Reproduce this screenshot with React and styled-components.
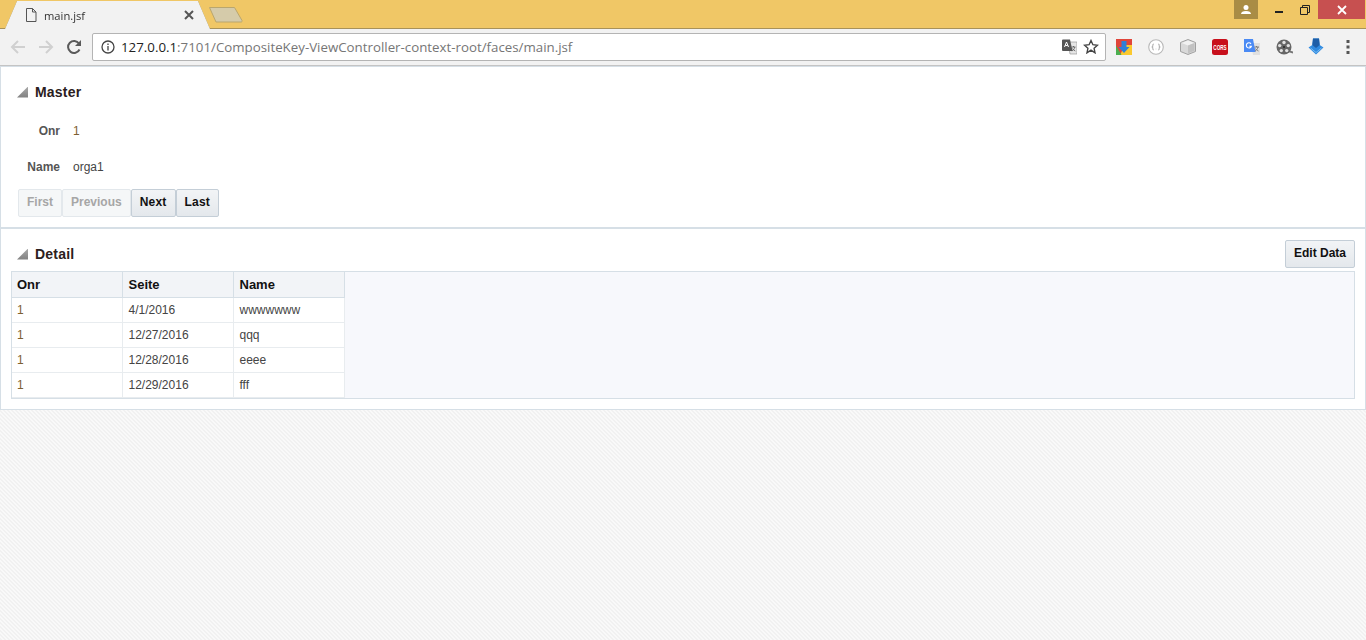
import React from "react";
import styled, { createGlobalStyle } from "styled-components";

const GlobalStyle = createGlobalStyle`
  html, body {
    margin: 0;
    padding: 0;
    height: 640px;
    overflow: hidden;
    font-family: "Liberation Sans", Arial, sans-serif;
    font-size: 12px;
    color: #444;
  }
  * { box-sizing: border-box; }
`;

const Page = styled.div`
  width: 1366px;
  height: 640px;
  display: flex;
  flex-direction: column;
  background-color: #f9f9f9;
  background-image: linear-gradient(
    45deg,
    #f1f1f1 25%,
    transparent 25%,
    transparent 50%,
    #f1f1f1 50%,
    #f1f1f1 75%,
    transparent 75%
  );
  background-size: 4px 4px;
`;

const TabStrip = styled.div`
  height: 29px;
  flex: none;
  display: flex;
  align-items: flex-end;
  background: #f0c766;
  border-bottom: 1px solid #a8925a;
`;

const TabShell = styled.div`
  margin-left: 5px;
  margin-bottom: -1px;
  filter: drop-shadow(0 0 0.6px #8a7433);
`;

const Tab = styled.div`
  width: 206px;
  height: 28px;
  padding: 0 17px 0 20px;
  display: flex;
  align-items: center;
  gap: 7px;
  background: #f2f2f2;
  clip-path: polygon(0 100%, 12px 0, 193px 0, 205px 100%);
  font-family: "Open Sans", sans-serif;
  font-size: 11.2px;
  color: #333;
`;

const TabTitle = styled.span`
  flex: 1;
`;

const NewTab = styled.svg`
  flex: none;
  margin-left: -3px;
  margin-bottom: 4px;
`;

const WindowControls = styled.div`
  margin-left: auto;
  align-self: flex-start;
  height: 19px;
  display: flex;
  padding-right: 1px;
`;

const Avatar = styled.div`
  width: 24px;
  height: 19px;
  margin-right: 8px;
  display: flex;
  align-items: center;
  justify-content: center;
  background: #a98c45;
`;

const WinButton = styled.div`
  width: ${(p) => p.$w}px;
  height: 19px;
  display: flex;
  align-items: center;
  justify-content: center;
  background: ${(p) => p.$bg || "transparent"};
`;

const Toolbar = styled.div`
  height: 37px;
  flex: none;
  display: flex;
  align-items: center;
  padding: 0 0 1px 4px;
  background: #f2f2f2;
  border-bottom: 1px solid #c4c4c4;
`;

const NavButton = styled.div`
  width: 28px;
  height: 28px;
  display: flex;
  align-items: center;
  justify-content: center;
`;

const Omnibox = styled.div`
  width: 1014px;
  height: 28px;
  margin-left: 4px;
  padding: 0 0 0 8px;
  display: flex;
  align-items: center;
  background: #fff;
  border: 1px solid #b4b4b4;
  border-radius: 2px;
`;

const Url = styled.div`
  flex: 1;
  margin-left: 6px;
  font-family: "Open Sans", sans-serif;
  font-size: 13.3px;
  color: #767676;
  white-space: nowrap;
`;

const Host = styled.span`
  color: #222;
`;

const StarSlot = styled.div`
  width: 28px;
  height: 26px;
  display: flex;
  align-items: center;
  justify-content: center;
`;

const Extensions = styled.div`
  display: flex;
  margin-left: 2px;
`;

const ExtIcon = styled.div`
  width: 32px;
  height: 28px;
  display: flex;
  align-items: center;
  justify-content: center;
`;

const Content = styled.div`
  width: 1366px;
  flex: none;
  display: flex;
  flex-direction: column;
  background: #fff;
  border: 1px solid #d6dfe6;
`;

const MasterPanel = styled.section`
  height: 160px;
  flex: none;
`;

const DetailPanel = styled.section`
  height: 182px;
  flex: none;
  padding: 11px 10px 0;
  border-top: 2px solid #d6dfe6;
`;

const PanelHeader = styled.div`
  height: ${(p) => p.$h}px;
  margin-bottom: ${(p) => p.$mb || 0}px;
  padding-left: ${(p) => p.$pl}px;
  display: flex;
  align-items: center;
`;

const Disclosure = styled.span`
  width: 11px;
  height: 11px;
  margin-right: 7px;
  background: linear-gradient(#a8a8a8, #808080);
  clip-path: polygon(100% 0, 100% 100%, 0 100%);
`;

const PanelTitle = styled.h2`
  margin: 0;
  font-size: 14px;
  letter-spacing: 0.2px;
  font-weight: bold;
  color: #2b2020;
`;

const FormRow = styled.div`
  height: ${(p) => p.$h}px;
  display: grid;
  grid-template-columns: 59px 1fr;
  column-gap: 13px;
  align-items: center;
`;

const FieldLabel = styled.label`
  text-align: right;
  font-weight: bold;
  color: #555;
`;

const FieldValue = styled.span`
  color: ${(p) => (p.$number ? "#7d6030" : "#444")};
`;

const ButtonRow = styled.div`
  display: flex;
  margin-left: 17px;
`;

const Btn = styled.button`
  height: 28px;
  padding: 0 8px 2px;
  font-family: inherit;
  font-size: 12px;
  font-weight: bold;
  letter-spacing: ${(p) => (p.disabled ? "0" : "0.2px")};
  color: ${(p) => (p.disabled ? "#a6a6a6" : "#111")};
  background: ${(p) =>
    p.disabled ? "#f5f7f8" : "linear-gradient(#f2f4f6, #e4e8ec)"};
  border: 1px solid ${(p) => (p.disabled ? "#e3e8ec" : "#c4ced7")};
  border-radius: 2px;
`;

const EditButton = styled(Btn)`
  margin-left: auto;
  letter-spacing: 0;
`;

const TableFrame = styled.div`
  height: 128px;
  background: #f7f8fc;
  border: 1px solid #d6dfe6;
`;

const Table = styled.table`
  width: 332px;
  border-collapse: collapse;
  table-layout: fixed;
  background: #fff;
`;

const Th = styled.th`
  height: 25px;
  padding: 0 5px;
  text-align: left;
  font-size: 13px;
  font-weight: bold;
  color: #111;
  background: #f2f4f7;
  border-right: 1px solid #d6dfe6;
  border-bottom: 1px solid #d6dfe6;

  & + & {
    padding-left: 6px;
  }
`;

const Td = styled.td`
  height: 25px;
  padding: 0 5px;
  font-size: 12px;
  color: ${(p) => (p.$number ? "#7d6030" : "#444")};
  border-right: 1px solid #e8ecef;
  border-bottom: 1px solid #e8ecef;

  & + & {
    padding-left: 6px;
  }
`;

const rows = [
  ["1", "4/1/2016", "wwwwwww"],
  ["1", "12/27/2016", "qqq"],
  ["1", "12/28/2016", "eeee"],
  ["1", "12/29/2016", "fff"],
];

const DocIcon = () => (
  <svg width="12" height="14" viewBox="0 0 12 14" fill="none" stroke="#555" strokeWidth="1">
    <path d="M1.5.5h6l3.500 3.500v9.500H1.500zM7.500.5V4H11" />
  </svg>
);

const CloseIcon = () => (
  <svg width="10" height="10" viewBox="0 0 10 10" stroke="#555" strokeWidth="2">
    <path d="M1 1l8 8M9 1l-8 8" />
  </svg>
);

const BackIcon = ({ flip }) => (
  <svg width="16" height="16" viewBox="0 0 16 16" fill="none" stroke="#d0d0d0" strokeWidth="2" transform={flip ? "scale(-1 1)" : undefined}>
    <path d="M15 8H2M8 2L2 8l6 6" />
  </svg>
);

const ReloadIcon = () => (
  <svg width="16" height="16" viewBox="0 0 16 16" fill="none">
    <path d="M13.500 10.500A6 6 0 1 1 13 4.500" stroke="#5a5a5a" strokeWidth="2" />
    <path d="M15 1v6H9z" fill="#5a5a5a" />
  </svg>
);

const InfoIcon = () => (
  <svg width="14" height="14" viewBox="0 0 14 14" fill="none" stroke="#444" strokeWidth="1.300">
    <circle cx="7" cy="7" r="6" />
    <path d="M7 6v4.500M7 3.500v1.500" />
  </svg>
);

const TranslateIcon = () => (
  <svg width="15" height="16" viewBox="0 0 15 16">
    <path d="M6 3h9v12H8z" fill="#e6e6e6" stroke="#8a8a8a" strokeWidth=".6" />
    <path d="M0 1.500A1 1 0 0 1 1 .5h7l2.500 11.500H1a1 1 0 0 1-1-1z" fill="#555" />
    <path d="M2.500 8l2-5 2 5M3.300 6.500h2.400" stroke="#fff" strokeWidth="1" fill="none" />
    <path d="M9.500 8h4M11.500 7v1M12.800 8c-.4 2-1.600 3.500-3 4M10.500 9.500c.5 1.200 1.500 2 2.800 2.500" stroke="#555" strokeWidth=".8" fill="none" />
  </svg>
);

const StarIcon = () => (
  <svg width="16" height="15" viewBox="0 0 16 15" fill="none" stroke="#444" strokeWidth="1.400">
    <path d="M8 1.500l1.900 4.200 4.600.500-3.400 3.100.9 4.500L8 11.100l-4 2.700.9-4.500L1.500 6.200l4.600-.500z" />
  </svg>
);

const ChromeStoreIcon = () => (
  <svg width="16" height="16" viewBox="0 0 16 16">
    <rect width="16" height="16" fill="#fbc92e" />
    <path d="M0 0h16v6H9L4 16H0z" fill="#e0453a" />
    <path d="M0 6.500L5.500 16H0z" fill="#4caf50" />
    <path d="M5.500 2h5v6h3L8 14 2.500 8h3z" fill="#2f7fd6" />
  </svg>
);

const BracesIcon = () => (
  <svg width="16" height="16" viewBox="0 0 16 16" fill="none">
    <circle cx="8" cy="8" r="7.300" fill="#fff" stroke="#b8b8b8" strokeWidth="1.100" />
    <path d="M5.800 5c-1 0-1 .8-1 1.500S4.800 8 3.800 8c1 0 1 .8 1 1.500s0 1.500 1 1.500M10.200 5c1 0 1 .8 1 1.500s0 1.500 1 1.500c-1 0-1 .8-1 1.500s0 1.500-1 1.500" stroke="#888" strokeWidth=".8" />
    <path d="M7.300 10h.2M8.500 10h.2" stroke="#888" strokeWidth=".8" />
  </svg>
);

const CubeIcon = () => (
  <svg width="16" height="16" viewBox="0 0 16 16">
    <path d="M8 .5l7.500 3v9L8 15.500.5 12.500v-9z" fill="#d9d9d9" stroke="#a0a0a0" />
    <path d="M1.500 4L8 1.500 14.500 4 8 6.500z" fill="#f1f1f1" />
    <path d="M8 6.500V14.500l6.500-2.700V4z" fill="#c2c2c2" />
  </svg>
);

const CorsIcon = () => (
  <svg width="16" height="16" viewBox="0 0 16 16">
    <rect width="16" height="16" rx="2.500" fill="#c8101c" />
    <text transform="translate(8 10.800) scale(.58 1)" textAnchor="middle" fontSize="8" fontWeight="bold" fill="#fff" fontFamily="Liberation Sans, sans-serif">CORS</text>
  </svg>
);

const GoogleTranslateIcon = () => (
  <svg width="16" height="16" viewBox="0 0 16 16">
    <path d="M7 4h9v12H9z" fill="#e0e0e0" />
    <path d="M0 0h9l2.500 13H0z" fill="#4a8af4" />
    <path d="M7 4.800A2.600 2.600 0 1 0 7.400 7.300H5.300" stroke="#fff" strokeWidth="1.100" fill="none" />
    <path d="M10.500 8h4.500M12.500 7v1M14 8c-.5 2-1.500 3.300-3 4.200M11.500 9.500c.6 1.200 1.500 2 3 2.500" stroke="#666" strokeWidth=".8" fill="none" />
  </svg>
);

const ReelIcon = () => (
  <svg width="17" height="16" viewBox="0 0 17 16">
    <path d="M12 11l5 1.500v2L12 13z" fill="#777" />
    <circle cx="8" cy="8" r="7.500" fill="#666" />
    <circle cx="8" cy="3.500" r="1.700" fill="#e2e2e2" />
    <circle cx="12.300" cy="6.600" r="1.700" fill="#e2e2e2" />
    <circle cx="10.700" cy="11.600" r="1.700" fill="#e2e2e2" />
    <circle cx="5.300" cy="11.600" r="1.700" fill="#e2e2e2" />
    <circle cx="3.700" cy="6.600" r="1.700" fill="#e2e2e2" />
    <circle cx="8" cy="8" r=".9" fill="#222" />
  </svg>
);

const ArrowDownIcon = () => (
  <svg width="16" height="17" viewBox="0 0 16 17">
    <path d="M5 0.500h6l.7 6.500 3.800 2.500L8 16.500.5 9.500 4.300 7z" fill="#2f8ae0" />
    <path d="M5 .5h6l.7 6.500L8 10 4.300 7z" fill="#1d5ea8" />
    <path d="M2.500 10L8 14.500l5.500-4.500" stroke="#8cc8f5" strokeWidth=".8" fill="none" />
  </svg>
);

const MenuDots = () => (
  <svg width="4" height="14" viewBox="0 0 4 14" fill="#555">
    <rect x="0.500" y="0" width="3" height="3" />
    <rect x="0.500" y="5.500" width="3" height="3" />
    <rect x="0.500" y="11" width="3" height="3" />
  </svg>
);

const extensions = [
  ChromeStoreIcon,
  BracesIcon,
  CubeIcon,
  CorsIcon,
  GoogleTranslateIcon,
  ReelIcon,
  ArrowDownIcon,
  MenuDots,
];

export default function App() {
  return (
    <Page>
      <GlobalStyle />
      <TabStrip>
        <TabShell>
          <Tab>
            <DocIcon />
            <TabTitle>main.jsf</TabTitle>
            <CloseIcon />
          </Tab>
        </TabShell>
        <NewTab width="36" height="18" viewBox="0 0 36 18">
          <path d="M1.500 1.500h25l7.500 13a1 1 0 0 1-1 1.500H8z" fill="#d5cbaa" stroke="#b9a66e" />
        </NewTab>
        <WindowControls>
          <Avatar>
            <svg width="10" height="9" viewBox="0 0 10 9" fill="#fff">
              <circle cx="5" cy="2.500" r="2.500" />
              <path d="M0 9c0-2 2-3 5-3s5 1 5 3z" />
            </svg>
          </Avatar>
          <WinButton $w={26}>
            <svg width="8" height="19" viewBox="0 0 8 19"><rect width="8" height="2" y="11" fill="#222" /></svg>
          </WinButton>
          <WinButton $w={26}>
            <svg width="10" height="10" viewBox="0 0 10 10" fill="none" stroke="#222">
              <path d="M2.500 2.500V.5h7v7h-2M.5 2.500h7v7h-7z" />
            </svg>
          </WinButton>
          <WinButton $w={47} $bg="#c75050">
            <svg width="10" height="10" viewBox="0 0 10 10" stroke="#fff" strokeWidth="1.800">
              <path d="M1 1l8 8M9 1l-8 8" />
            </svg>
          </WinButton>
        </WindowControls>
      </TabStrip>
      <Toolbar>
        <NavButton><BackIcon /></NavButton>
        <NavButton><BackIcon flip /></NavButton>
        <NavButton><ReloadIcon /></NavButton>
        <Omnibox>
          <InfoIcon />
          <Url><Host>127.0.0.1</Host>:7101/CompositeKey-ViewController-context-root/faces/main.jsf</Url>
          <TranslateIcon />
          <StarSlot><StarIcon /></StarSlot>
        </Omnibox>
        <Extensions>
          {extensions.map((Icon, i) => (
            <ExtIcon key={i}><Icon /></ExtIcon>
          ))}
        </Extensions>
      </Toolbar>
      <Content>
        <MasterPanel>
          <PanelHeader $h={50} $pl={16}>
            <Disclosure />
            <PanelTitle>Master</PanelTitle>
          </PanelHeader>
          <FormRow $h={28}>
            <FieldLabel>Onr</FieldLabel>
            <FieldValue $number>1</FieldValue>
          </FormRow>
          <FormRow $h={44}>
            <FieldLabel>Name</FieldLabel>
            <FieldValue>orga1</FieldValue>
          </FormRow>
          <ButtonRow>
            <Btn disabled>First</Btn>
            <Btn disabled>Previous</Btn>
            <Btn>Next</Btn>
            <Btn>Last</Btn>
          </ButtonRow>
        </MasterPanel>
        <DetailPanel>
          <PanelHeader $h={28} $mb={3} $pl={6}>
            <Disclosure />
            <PanelTitle>Detail</PanelTitle>
            <EditButton>Edit Data</EditButton>
          </PanelHeader>
          <TableFrame>
            <Table>
              <colgroup>
                <col width="110" />
                <col width="111" />
                <col width="111" />
              </colgroup>
              <thead>
                <tr><Th>Onr</Th><Th>Seite</Th><Th>Name</Th></tr>
              </thead>
              <tbody>
                {rows.map((r, i) => (
                  <tr key={i}>
                    <Td $number>{r[0]}</Td>
                    <Td>{r[1]}</Td>
                    <Td>{r[2]}</Td>
                  </tr>
                ))}
              </tbody>
            </Table>
          </TableFrame>
        </DetailPanel>
      </Content>
    </Page>
  );
}
